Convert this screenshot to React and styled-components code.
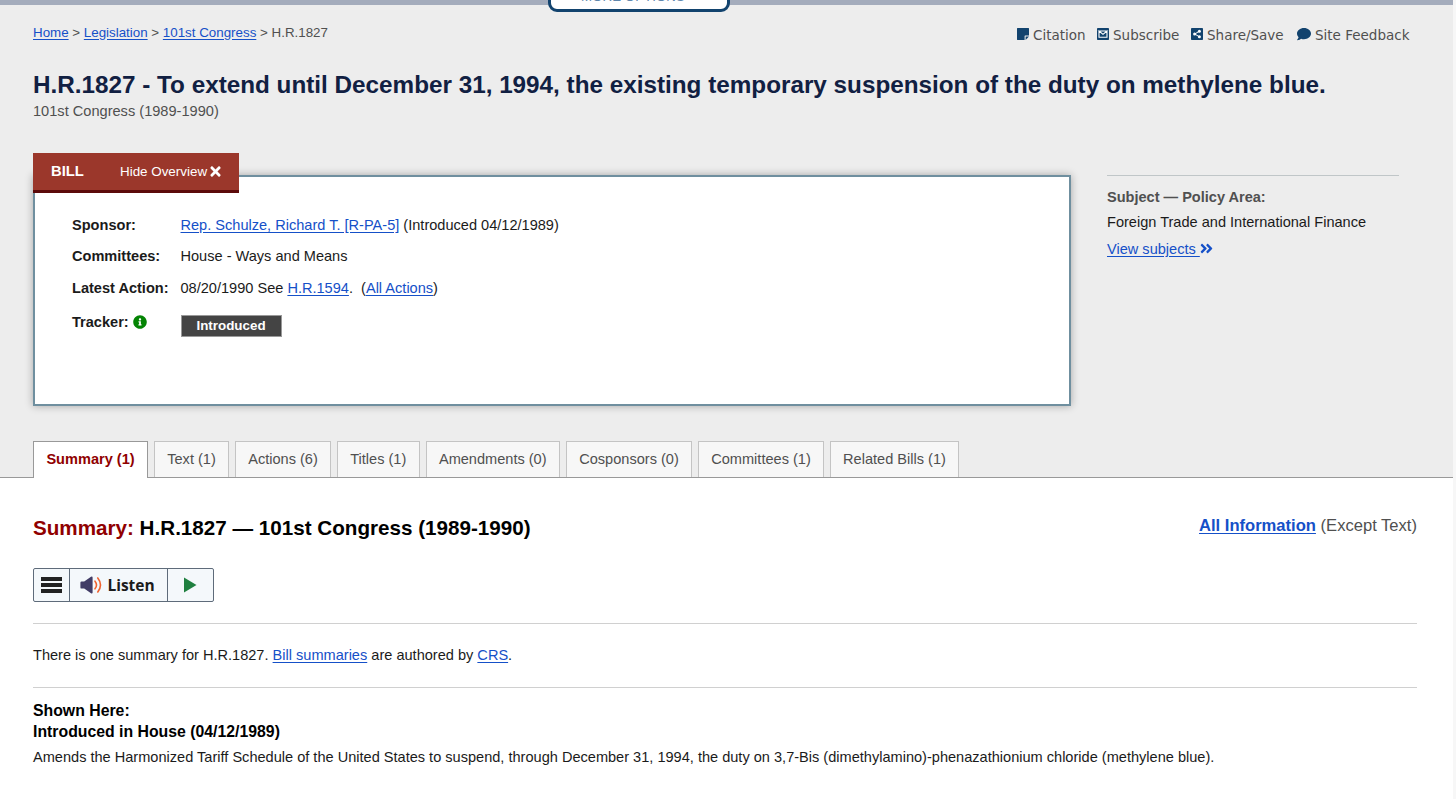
import React from "react";
import styled, { createGlobalStyle } from "styled-components";
import {
  FaComment,
  FaTimes,
  FaInfoCircle,
  FaAngleDoubleRight,
} from "react-icons/fa";

const Colors = {
  link: "#1550c8",
  navy: "#12436e",
  title: "#112042",
  text: "#1b1b1b",
  muted: "#505050",
  red: "#9b372b",
  darkRed: "#900000",
  page: "#ededed",
};

const NoteIcon = () => (
  <svg viewBox="0 0 12 12">
    <path d="M0 .4Q0 0 .4 0h11.2q.4 0 .4.4V7.6H8.2q-.6 0-.6.6V12H.4Q0 12 0 11.6z" />
    <path d="M8.6 8.6H12L8.6 12z" />
  </svg>
);

const MailIcon = () => (
  <svg viewBox="0 0 12 12">
    <rect width="12" height="12" rx=".8" />
    <path
      d="M2 3.3v5.9h8V3.3M2 3l4 3.4L10 3z"
      fill="none"
      stroke="#fff"
      strokeWidth="1.1"
    />
  </svg>
);

const ShareIcon = () => (
  <svg viewBox="0 0 12 12">
    <rect width="12" height="12" rx=".8" />
    <path d="M8.2 3.3L3.8 6l4.4 2.7" fill="none" stroke="#fff" />
    <g fill="#fff">
      <circle cx="8.4" cy="3.2" r="1.5" />
      <circle cx="3.6" cy="6" r="1.5" />
      <circle cx="8.4" cy="8.8" r="1.5" />
    </g>
  </svg>
);

const breadcrumbs = ["Home", "Legislation", "101st Congress"];

const tools = [
  { label: "Citation", icon: <NoteIcon />, width: 80 },
  { label: "Subscribe", icon: <MailIcon />, width: 94 },
  { label: "Share/Save", icon: <ShareIcon />, width: 106 },
  { label: "Site Feedback", icon: <FaComment />, width: 112, wide: true },
];

const tabs = [
  { label: "Summary (1)", width: 115, active: true },
  { label: "Text (1)", width: 75 },
  { label: "Actions (6)", width: 96 },
  { label: "Titles (1)", width: 82.5 },
  { label: "Amendments (0)", width: 134.5 },
  { label: "Cosponsors (0)", width: 126 },
  { label: "Committees (1)", width: 126 },
  { label: "Related Bills (1)", width: 129 },
];

const ListenPlayer = () => (
  <Player>
    <PlayerButton $width={35}>
      <Bars>
        <i />
        <i />
        <i />
      </Bars>
    </PlayerButton>
    <PlayerButton $width={98}>
      <svg width="23" height="18" viewBox="0 0 23 18">
        <path
          d="M1.6 5.4h2.6L11 .8q1.6-.6 1.6.8v14.8q0 1.4-1.6.8l-6.8-4.6H1.6Q.4 12.6.4 11.4V6.6q0-1.2 1.2-1.2z"
          fill="#413c66"
        />
        <path
          d="M15 5.2q3 3.8 0 7.6M17.8 2q5.4 7 0 14"
          fill="none"
          stroke="#f0622f"
          strokeWidth="1.6"
          strokeLinecap="round"
        />
      </svg>
      <span>Listen</span>
    </PlayerButton>
    <PlayerButton $width={45}>
      <svg width="13" height="16" viewBox="0 0 13 16">
        <path d="M0 .5L12.5 8 0 15.5z" fill="#1f8040" />
      </svg>
    </PlayerButton>
  </Player>
);

const App = () => {
  return (
    <Page>
      <GlobalStyle />
      <Main>
        <Hero>
          <TopBar>
            <MoreOptions>MORE OPTIONS</MoreOptions>
          </TopBar>

          <TopRow>
            <Breadcrumb>
              {breadcrumbs.map((ele) => (
                <React.Fragment key={ele}>
                  <Link href="#">{ele}</Link> &gt;{" "}
                </React.Fragment>
              ))}
              H.R.1827
            </Breadcrumb>
            <Tools>
              {tools.map((ele) => (
                <Tool key={ele.label} $width={ele.width} $wide={ele.wide}>
                  {ele.icon}
                  <span>{ele.label}</span>
                </Tool>
              ))}
            </Tools>
          </TopRow>

          <Title>
            H.R.1827 - To extend until December 31, 1994, the existing temporary
            suspension of the duty on methylene blue.
          </Title>
          <Congress>101st Congress (1989-1990)</Congress>

          <OverviewRow>
            <Overview>
              <BillTab>
                <strong>BILL</strong>
                <span>Hide Overview</span>
                <FaTimes />
              </BillTab>
              <Details>
                <dt>Sponsor:</dt>
                <dd>
                  <Link href="#">Rep. Schulze, Richard T. [R-PA-5]</Link>{" "}
                  (Introduced 04/12/1989)
                </dd>
                <dt>Committees:</dt>
                <dd>House - Ways and Means</dd>
                <dt>Latest Action:</dt>
                <dd>
                  08/20/1990 See <Link href="#">H.R.1594</Link>. &nbsp;(
                  <Link href="#">All Actions</Link>)
                </dd>
                <dt className="tracker">
                  Tracker: <FaInfoCircle />
                </dt>
                <dd className="tracker">
                  <Status>Introduced</Status>
                </dd>
              </Details>
            </Overview>
            <Subject>
              <h3>Subject — Policy Area:</h3>
              <p>Foreign Trade and International Finance</p>
              <a href="#">
                <u>View subjects </u>
                <FaAngleDoubleRight />
              </a>
            </Subject>
          </OverviewRow>

          <Tabs>
            {tabs.map((ele) => (
              <Tab key={ele.label} $width={ele.width} $active={ele.active}>
                {ele.label}
              </Tab>
            ))}
          </Tabs>
        </Hero>

        <Content>
          <ContentHead>
            <h2>
              <span>Summary:</span> H.R.1827 — 101st Congress (1989-1990)
            </h2>
            <p>
              <Link href="#">All Information</Link> (Except Text)
            </p>
          </ContentHead>
          <ListenPlayer />
          <Authored>
            There is one summary for H.R.1827. <Link href="#">Bill summaries</Link>{" "}
            are authored by <Link href="#">CRS</Link>.
          </Authored>
          <Shown>
            <h3>Shown Here:</h3>
            <h3>Introduced in House (04/12/1989)</h3>
            <p>
              Amends the Harmonized Tariff Schedule of the United States to
              suspend, through December 31, 1994, the duty on 3,7-Bis
              (dimethylamino)-phenazathionium chloride (methylene blue).
            </p>
          </Shown>
        </Content>
      </Main>
    </Page>
  );
};

const GlobalStyle = createGlobalStyle`
  * {
    box-sizing: border-box;
    margin: 0;
    padding: 0;
  }
  body {
    background: #f7f7f7;
    font-family: "Liberation Sans", Arial, sans-serif;
    font-size: 14.57px;
    color: ${Colors.text};
    overflow: hidden;
  }
`;

const Page = styled.div`
  height: 799px;
  padding-right: 3px;
  overflow: hidden;
`;

const Main = styled.main`
  height: 100%;
  background: #fff;
`;

const Link = styled.a`
  color: ${Colors.link};
  text-decoration: underline;
  text-underline-offset: 1.5px;
`;

const Hero = styled.header`
  height: 478px;
  background: ${Colors.page};
  border-bottom: 1px solid #999;
`;

const TopBar = styled.div`
  position: relative;
  height: 5px;
  background: #a4acbc;
`;

const MoreOptions = styled.div`
  position: absolute;
  left: 548px;
  bottom: -7px;
  width: 182px;
  height: 36px;
  border: 3px solid ${Colors.navy};
  border-radius: 9px;
  background: #fff;
  color: #5f87ad;
  font-size: 13.2px;
  line-height: 35px;
  letter-spacing: 0.1px;
  text-align: center;
  padding-right: 12px;
`;

const TopRow = styled.div`
  display: flex;
  justify-content: space-between;
  padding: 18px 44px 0 33px;
  height: 62px;
  color: ${Colors.muted};
`;

const Breadcrumb = styled.nav`
  padding-top: 1px;
  font-size: 13.35px;
  line-height: 18px;
`;

const Tools = styled.div`
  display: flex;
  height: 22px;
`;

const Tool = styled.div`
  display: flex;
  align-items: center;
  width: ${({ $width }) => $width}px;
  font-family: "DejaVu Sans", Verdana, sans-serif;
  font-size: 13.5px;
  line-height: 22px;
  white-space: nowrap;

  span {
    padding-top: 1px;
  }

  svg {
    flex: none;
    width: ${({ $wide }) => ($wide ? 14 : 12)}px;
    height: ${({ $wide }) => ($wide ? 14 : 12)}px;
    margin-right: 4px;
    color: ${Colors.navy};
    fill: ${Colors.navy};
  }
`;

const Title = styled.h1`
  padding-left: 33px;
  color: ${Colors.title};
  font-size: 24.28px;
  line-height: 35px;
  white-space: nowrap;
`;

const Congress = styled.p`
  padding-left: 33px;
  color: ${Colors.muted};
  font-size: 14.6px;
  line-height: 18px;
`;

const OverviewRow = styled.div`
  display: flex;
  align-items: flex-start;
  margin-top: 55px;
  padding-left: 33px;
`;

const Overview = styled.section`
  position: relative;
  width: 1038px;
  height: 231px;
  padding: 35px 0 0 37px;
  background: #fff;
  border: 2px solid #6f8f9f;
  box-shadow: 0 0 8px rgba(0, 0, 0, 0.3);
`;

const BillTab = styled.div`
  position: absolute;
  top: -24px;
  left: -2px;
  display: flex;
  align-items: center;
  width: 206px;
  height: 40px;
  padding: 0 0 1px 18px;
  background: ${Colors.red};
  border-bottom: 3px solid #5c0a0a;
  color: #fff;
  font-size: 13.4px;

  strong {
    width: 69px;
    font-size: 14.8px;
  }

  svg {
    margin-left: 2px;
    width: 13px;
    height: 15px;
  }
`;

const Details = styled.dl`
  display: grid;
  grid-template-columns: 108.5px 1fr;
  grid-template-rows: 31px 32px 31px 36px;
  line-height: 26px;

  dt {
    font-weight: bold;
    white-space: nowrap;
  }

  .tracker {
    padding-top: 3px;
  }

  svg {
    width: 14px;
    height: 14px;
    color: #048404;
    vertical-align: -2px;
  }
`;

const Status = styled.div`
  width: 101px;
  height: 22px;
  margin-top: 6px;
  border: 1px solid #999;
  background: #444;
  color: #fff;
  font-size: 13.4px;
  font-weight: bold;
  line-height: 20px;
  text-align: center;
`;

const Subject = styled.aside`
  width: 292px;
  margin-left: 36px;
  padding-top: 8px;
  border-top: 1px solid #c0c6c8;

  h3 {
    color: ${Colors.muted};
    font-size: 14.55px;
    line-height: 26px;
  }

  p {
    line-height: 25px;
  }

  a {
    color: ${Colors.link};
    line-height: 28px;
    text-decoration: none;
    white-space: pre;
  }

  u {
    text-underline-offset: 1.5px;
  }

  svg {
    width: 13px;
    height: 17px;
    vertical-align: -3px;
  }
`;

const Tabs = styled.nav`
  display: flex;
  gap: 6px;
  margin-top: 35px;
  padding-left: 33px;
`;

const Tab = styled.a`
  width: ${({ $width }) => $width}px;
  height: ${({ $active }) => ($active ? 37 : 36)}px;
  border: 1px solid ${({ $active }) => ($active ? "#999" : "#c4c4c4")};
  border-bottom: 0;
  background: ${({ $active }) => ($active ? "#fff" : "#f7f7f7")};
  color: ${({ $active }) => ($active ? Colors.darkRed : Colors.muted)};
  font-weight: ${({ $active }) => ($active ? "bold" : "normal")};
  line-height: 34px;
  text-align: center;
  white-space: nowrap;
`;

const Content = styled.section`
  padding: 34px 36px 0 33px;
`;

const ContentHead = styled.div`
  display: flex;
  justify-content: space-between;

  h2 {
    color: #000;
    font-size: 20.64px;
    line-height: 32px;
  }

  h2 span {
    color: ${Colors.darkRed};
  }

  p {
    color: ${Colors.muted};
    font-size: 16.58px;
    line-height: 27px;
  }

  a {
    font-weight: bold;
  }
`;

const Player = styled.div`
  display: flex;
  width: 181px;
  height: 34px;
  margin: 24px 0 21px;
  border: 1px solid #5e6b7a;
  border-radius: 2px;
  background: #f4f8fb;
`;

const PlayerButton = styled.div`
  display: flex;
  align-items: center;
  justify-content: center;
  gap: 4px;
  width: ${({ $width }) => $width}px;
  box-sizing: content-box;
  font-family: "Open Sans", "Noto Sans", sans-serif;
  font-size: 15.5px;
  font-weight: bold;
  line-height: 20px;

  span {
    padding: 0 2px 1px 0;
  }

  & + & {
    border-left: 1px solid #5e6b7a;
  }
`;

const Bars = styled.div`
  display: flex;
  flex-direction: column;
  gap: 2px;

  i {
    width: 21px;
    height: 4px;
    background: #222;
  }
`;

const Authored = styled.p`
  height: 65px;
  border: 1px solid #d0d0d0;
  border-width: 1px 0;
  line-height: 62px;
`;

const Shown = styled.div`
  padding-top: 12px;

  h3 {
    color: #000;
    font-size: 15.82px;
    line-height: 21px;
  }

  p {
    line-height: 30px;
    white-space: nowrap;
  }
`;

export default App;
